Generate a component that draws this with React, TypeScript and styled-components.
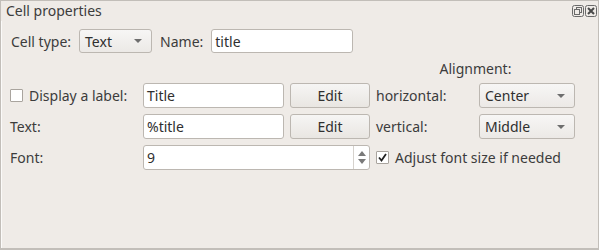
import React from "react";
import styled, { createGlobalStyle } from "styled-components";

const Global = createGlobalStyle`
  html, body {
    margin: 0;
    padding: 0;
    background: #efebe7;
  }
  body {
    font-family: "Noto Sans", "Open Sans", sans-serif;
    font-size: 14px;
    color: #3c3c3c;
  }
`;

const Dock = styled.div`
  width: 599px;
  height: 250px;
  box-sizing: border-box;
  background: #efebe7;
  border-top: 1px solid #c2beb9;
  border-right: 1px solid #c2beb9;
  border-bottom: 2px solid #c2beb9;
  border-left: 1px solid #c2beb9;
  display: flex;
  flex-direction: column;
`;

const TitleBar = styled.div`
  display: flex;
  align-items: center;
  justify-content: space-between;
  height: 20px;
  padding: 0 1px 0 5px;
`;

const Title = styled.span`
  font-size: 14px;
  line-height: 18px;
`;

const TitleButtons = styled.div`
  display: flex;
  gap: 1px;
  align-items: center;
`;

const TitleButton = styled.div`
  width: 12px;
  height: 12px;
  display: flex;
  align-items: center;
  justify-content: center;
`;

const Body = styled.div`
  flex: 1;
  border-left: 1px solid #fbfaf9;
  padding: 8px 0 0 8px;
`;

const TopRow = styled.div`
  display: flex;
  align-items: center;
  height: 24px;
  gap: 8px;
  padding-left: 1px;
`;

const Label = styled.span<{ $center?: boolean; $span?: number }>`
  white-space: nowrap;
  display: flex;
  align-items: center;
  gap: 6px;
  ${(p) => (p.$center ? "justify-content: center;" : "")}
  ${(p) => (p.$span ? `grid-column: span ${p.$span};` : "")}
`;

const Combo = styled.div<{ $w: number }>`
  width: ${(p) => p.$w}px;
  height: 100%;
  box-sizing: border-box;
  border: 1px solid #bcb7b1;
  border-radius: 3px;
  background: linear-gradient(#f7f6f5, #ece9e6);
  display: flex;
  align-items: center;
  justify-content: space-between;
  padding: 0 9px 0 5px;
  color: #2f2f2f;
`;

const Arrow = styled.span`
  width: 0;
  height: 0;
  border-left: 4px solid transparent;
  border-right: 4px solid transparent;
  border-top: 4px solid #6e6e6e;
`;

const Input = styled.div<{ $w?: number }>`
  ${(p) => (p.$w ? `width: ${p.$w}px;` : "")}
  height: 100%;
  box-sizing: border-box;
  border: 1px solid #bcb7b1;
  border-radius: 3px;
  background: #ffffff;
  display: flex;
  align-items: center;
  padding: 0 3px;
  color: #2f2f2f;
`;

const Form = styled.div`
  display: grid;
  grid-template-columns: 127px 141px 80px 97px 96px;
  grid-template-rows: 17px 25px 25px 25px;
  column-gap: 6px;
  row-gap: 6px;
  margin-top: 7px;
`;

const Button = styled.div`
  box-sizing: border-box;
  border: 1px solid #bcb7b1;
  border-radius: 3px;
  background: linear-gradient(#f6f5f4, #e9e6e2);
  display: flex;
  align-items: center;
  justify-content: center;
  color: #2f2f2f;
`;

const Spin = styled(Input)`
  grid-column: span 2;
  padding-right: 0;
  justify-content: space-between;
`;

const SpinArrows = styled.div`
  width: 15px;
  height: 100%;
  border-left: 1px solid #d6d2cd;
  display: flex;
  flex-direction: column;
  align-items: center;
  justify-content: center;
  gap: 3px;
`;

const SpinUp = styled.span`
  width: 0;
  height: 0;
  border-left: 4px solid transparent;
  border-right: 4px solid transparent;
  border-bottom: 5px solid #7a7a7a;
`;

const SpinDown = styled(SpinUp)`
  border-bottom: none;
  border-top: 5px solid #7a7a7a;
`;

const Check = styled.span`
  width: 13px;
  height: 13px;
  box-sizing: border-box;
  border: 1px solid #a9a49e;
  border-radius: 1px;
  background: #ffffff;
  display: inline-flex;
  align-items: center;
  justify-content: center;
  flex: none;
`;

const CheckLabel = styled(Label)`
  grid-column: span 2;
`;

const FloatIcon = () => (
  <svg width="12" height="12" viewBox="0 0 12 12">
    <rect x="0.5" y="0.5" width="11" height="11" rx="2" fill="none" stroke="#6a6a6a" />
    <rect x="4.5" y="2.5" width="5" height="5" fill="none" stroke="#6a6a6a" />
    <rect x="2.5" y="4.5" width="5" height="5" fill="#efebe7" stroke="#6a6a6a" />
  </svg>
);

const CloseIcon = () => (
  <svg width="12" height="12" viewBox="0 0 12 12">
    <rect x="0.5" y="0.5" width="11" height="11" rx="2" fill="none" stroke="#6a6a6a" />
    <path d="M3 3 L9 9 M9 3 L3 9" stroke="#4a4a4a" strokeWidth="2" />
  </svg>
);

const Tick = () => (
  <svg width="11" height="11" viewBox="0 0 11 11">
    <path d="M2 5.5 L4.5 8.5 L9 2" fill="none" stroke="#222" strokeWidth="1.8" />
  </svg>
);

export default function App() {
  return (
    <>
      <Global />
      <Dock>
        <TitleBar>
          <Title>Cell properties</Title>
          <TitleButtons>
            <TitleButton>
              <FloatIcon />
            </TitleButton>
            <TitleButton>
              <CloseIcon />
            </TitleButton>
          </TitleButtons>
        </TitleBar>
        <Body>
          <TopRow>
            <Label>Cell type:</Label>
            <Combo $w={73}>
              Text <Arrow />
            </Combo>
            <Label>Name:</Label>
            <Input $w={142}>title</Input>
          </TopRow>
          <Form>
            <span />
            <span />
            <span />
            <Label $center $span={2}>
              Alignment:
            </Label>

            <Label>
              <Check />
              Display a label:
            </Label>
            <Input>Title</Input>
            <Button>Edit</Button>
            <Label>horizontal:</Label>
            <Combo $w={96}>
              Center <Arrow />
            </Combo>

            <Label>Text:</Label>
            <Input>%title</Input>
            <Button>Edit</Button>
            <Label>vertical:</Label>
            <Combo $w={96}>
              Middle <Arrow />
            </Combo>

            <Label>Font:</Label>
            <Spin>
              9
              <SpinArrows>
                <SpinUp />
                <SpinDown />
              </SpinArrows>
            </Spin>
            <CheckLabel>
              <Check>
                <Tick />
              </Check>
              Adjust font size if needed
            </CheckLabel>
          </Form>
        </Body>
      </Dock>
    </>
  );
}
